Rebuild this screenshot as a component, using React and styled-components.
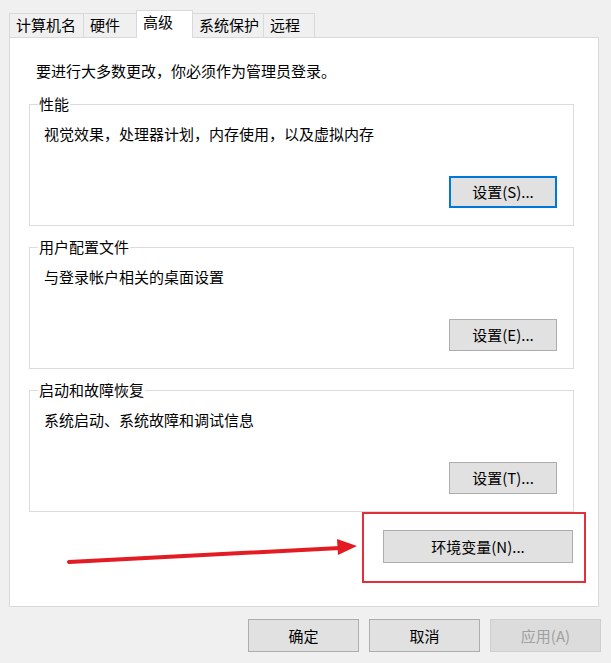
import styled, { createGlobalStyle, css } from "styled-components";

const GlobalStyle = createGlobalStyle`
  html, body {
    margin: 0;
    padding: 0;
    background: #f0f0f0;
  }
  body {
    font-family: "Noto Sans CJK SC", "Noto Sans", sans-serif;
    font-size: 15px;
    color: #000;
  }
`;

const Window = styled.div`
  position: relative;
  width: 611px;
  height: 663px;
  box-sizing: border-box;
  padding: 10px 0 0 9px;
`;

const TabBar = styled.div`
  display: flex;
  align-items: flex-end;
  height: 27px;
`;

const Tab = styled.div`
  box-sizing: border-box;
  width: ${(p) => p.$width}px;
  height: 24px;
  margin-left: -1px;
  padding: 1px 0 0 6px;
  border: 1px solid #d9d9d9;
  border-bottom: none;
  background: #f0f0f0;
  line-height: 20px;
  white-space: nowrap;

  &:first-child {
    margin-left: 0;
  }

  ${(p) =>
    p.$active &&
    css`
      position: relative;
      z-index: 1;
      height: 28px;
      margin-bottom: -1px;
      background: #fff;
    `}
`;

const Panel = styled.div`
  box-sizing: border-box;
  width: 590px;
  height: 570px;
  background: #fff;
  border: 1px solid #d9d9d9;
  display: flex;
  flex-direction: column;
`;

const Notice = styled.div`
  padding: 23px 0 0 26px;
  line-height: 20px;
  margin-bottom: 23px;
`;

const GroupBox = styled.section`
  position: relative;
  box-sizing: border-box;
  height: 122px;
  margin: 0 24px 21px 19px;
  padding: 19px 16px 17px 14px;
  border: 1px solid #dcdcdc;
  display: flex;
  flex-direction: column;

  &:last-of-type {
    margin-bottom: 0;
  }
`;

const Legend = styled.span`
  position: absolute;
  top: -11px;
  left: 8px;
  padding: 0 1px;
  background: #fff;
  line-height: 20px;
`;

const Description = styled.div`
  line-height: 20px;
`;

const Button = styled.button`
  box-sizing: border-box;
  width: ${(p) => p.$width || 108}px;
  height: ${(p) => p.$height || 32}px;
  padding: 0;
  font-family: inherit;
  font-size: 15px;
  line-height: 20px;
  color: #000;
  background: #e1e1e1;
  border: 1px solid #adadad;
  border-radius: 0;

  ${(p) =>
    p.$focused &&
    css`
      border: 2px solid #0078d7;
    `}

  &:disabled {
    color: #a0a0a0;
    background: #dcdcdc;
    border-color: #cfcfcf;
  }
`;

const GroupActions = styled.div`
  margin-top: auto;
  display: flex;
  justify-content: flex-end;
`;

const Highlight = styled.div`
  box-sizing: border-box;
  align-self: flex-end;
  width: 224px;
  height: 71px;
  margin: 0 12px 0 0;
  padding: 16px 0 0 19px;
  border: 2px solid #e0303a;
`;

const Footer = styled.div`
  display: flex;
  justify-content: flex-end;
  gap: 10px;
  margin-top: 12px;
  padding-right: 10px;
`;

const Arrow = styled.svg`
  position: absolute;
  left: 0;
  top: 0;
  pointer-events: none;
`;

const groups = [
  { title: "性能", text: "视觉效果，处理器计划，内存使用，以及虚拟内存", button: "设置(S)...", focused: true },
  { title: "用户配置文件", text: "与登录帐户相关的桌面设置", button: "设置(E)..." },
  { title: "启动和故障恢复", text: "系统启动、系统故障和调试信息", button: "设置(T)..." },
];

const tabs = [
  { label: "计算机名", width: 75 },
  { label: "硬件", width: 54 },
  { label: "高级", width: 57, active: true },
  { label: "系统保护", width: 72 },
  { label: "远程", width: 52 },
];

export default function App() {
  return (
    <>
      <GlobalStyle />
      <Window>
        <TabBar>
          {tabs.map((t) => (
            <Tab key={t.label} $width={t.width} $active={t.active}>
              {t.label}
            </Tab>
          ))}
        </TabBar>
        <Panel>
          <Notice>要进行大多数更改，你必须作为管理员登录。</Notice>
          {groups.map((g) => (
            <GroupBox key={g.title}>
              <Legend>{g.title}</Legend>
              <Description>{g.text}</Description>
              <GroupActions>
                <Button $focused={g.focused}>{g.button}</Button>
              </GroupActions>
            </GroupBox>
          ))}
          <Highlight>
            <Button $width={190} $height={33}>环境变量(N)...</Button>
          </Highlight>
        </Panel>
        <Footer>
          <Button $width={111} $height={33}>确定</Button>
          <Button $width={111} $height={33}>取消</Button>
          <Button $width={111} $height={33} disabled>应用(A)</Button>
        </Footer>
        <Arrow width="611" height="663" viewBox="0 0 611 663">
          <line x1="69" y1="562" x2="340" y2="548" stroke="#e31b23" strokeWidth="4" strokeLinecap="round" />
          <polygon points="357,546 337,539 338,555" fill="#e31b23" />
        </Arrow>
      </Window>
    </>
  );
}
